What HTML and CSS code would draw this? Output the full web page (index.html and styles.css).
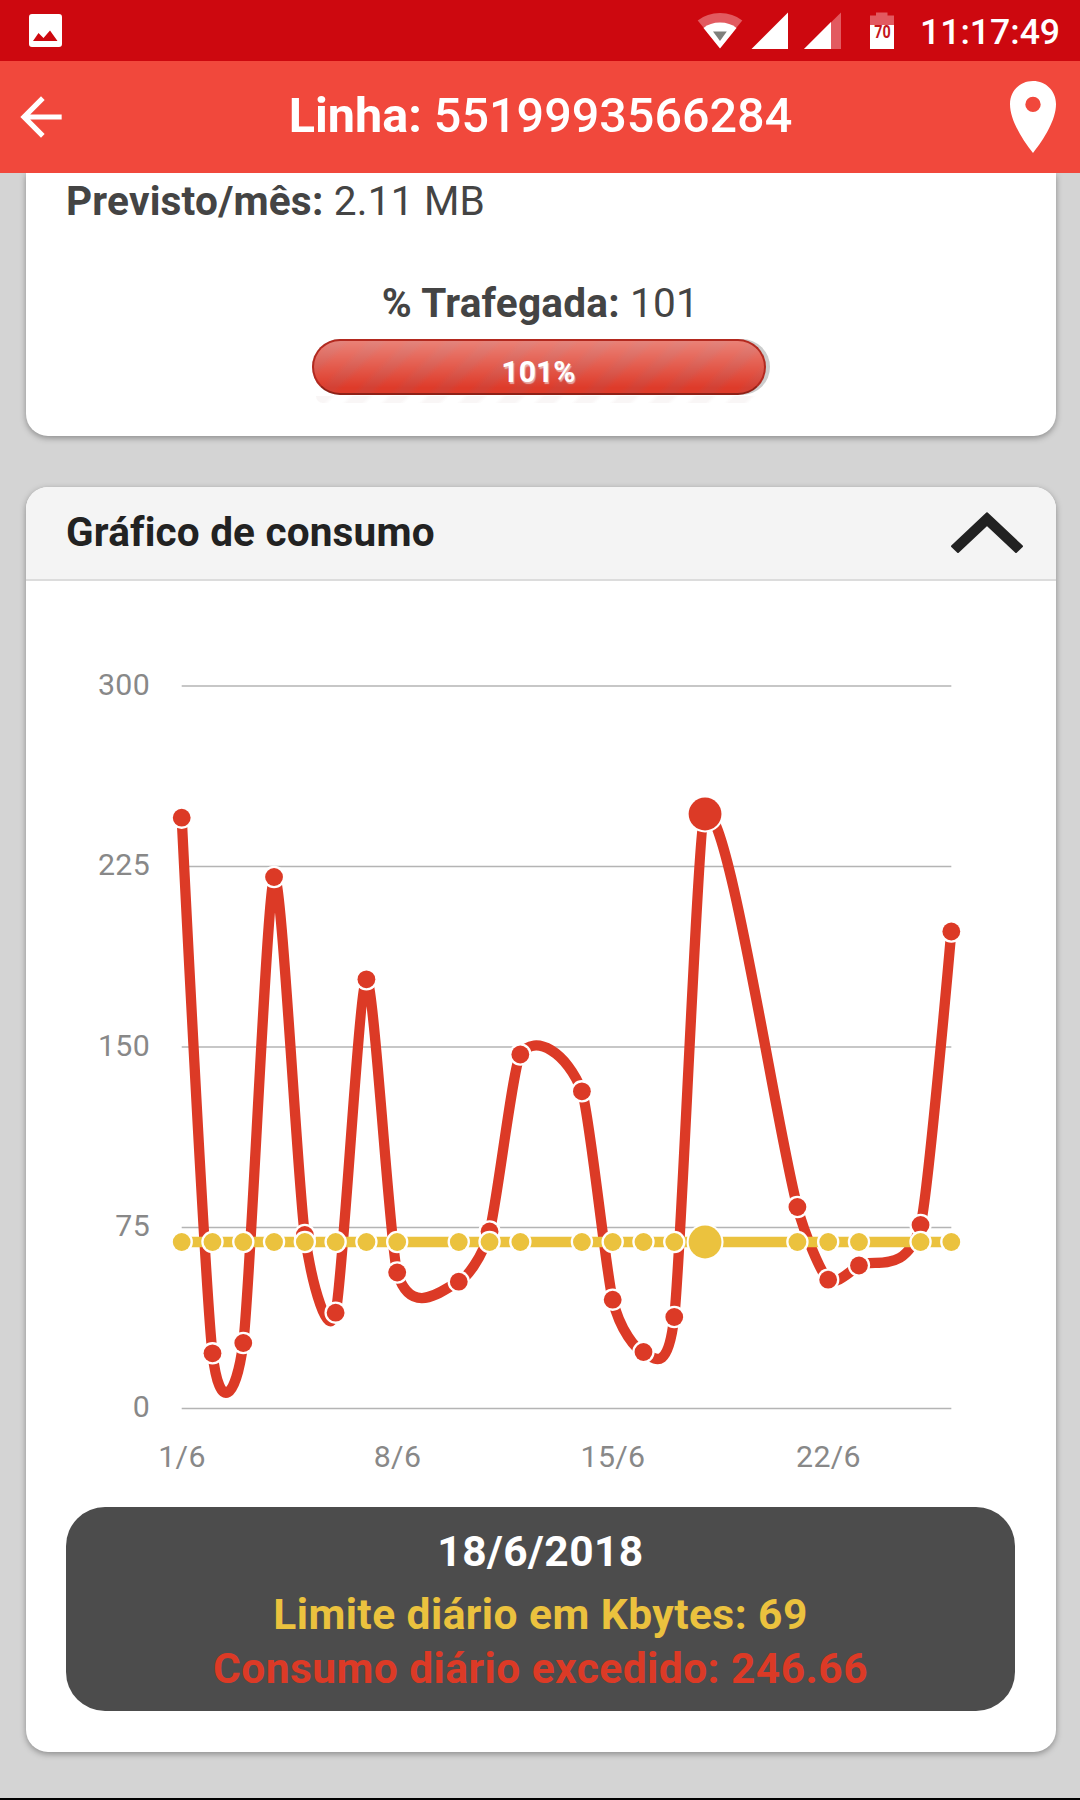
FILE: index.html
```html
<!DOCTYPE html>
<html lang="pt-BR">
<head>
<meta charset="utf-8">
<title>Linha</title>
<link rel="stylesheet" href="styles.css">
</head>
<body>
<div class="status">
  <svg class="status-picture" viewBox="0 0 33 33"><path fill="#fff" fill-rule="evenodd" d="M3 0H30a3 3 0 0 1 3 3V30a3 3 0 0 1-3 3H3a3 3 0 0 1-3-3V3a3 3 0 0 1 3-3ZM4 27H28.500L21 16.500L14.500 24L9.500 19Z"/></svg>
  <svg class="status-icons" viewBox="0 0 200 40">
    <g transform="translate(-697 -11)">
      <path fill="#e25a60" d="M720 48L697.700 20.500Q707 13 720 13T742.300 20.500Z"/>
      <path fill="#fff" d="M720 48.500L703.500 28Q710 22.500 720 22.500T736.500 28Z"/>
      <path fill="#80807c" d="M713 31.500H726.800L720 41Z"/>
      <path fill="#fff" d="M751.500 49L788 12.500V49Z"/>
      <path fill="#e25a60" d="M804 49L841 12.500V49Z"/>
      <path fill="#fff" d="M804 49L831 22V49Z"/>
      <path fill="#e25a60" d="M870 25V15.500H876V12.500H887.500V15.500H894V25Z"/>
      <path fill="#fff" d="M870 25H894V49H870Z"/>
      <text class="battery-level" x="882.500" y="37.500" textLength="16.500" lengthAdjust="spacingAndGlyphs">70</text>
    </g>
  </svg>
  <span class="clock">11:17:49</span>
</div>
<header class="topbar">
  <svg class="back" viewBox="0 0 24 24"><path fill="#fff" d="M20 11H7.830l5.590-5.590L12 4l-8 8 8 8 1.410-1.410L7.830 13H20z"/></svg>
  <h1 class="title"><b>Linha:</b> 5519993566284</h1>
  <svg class="pin" viewBox="0 0 46 72"><path fill="#fff" fill-rule="evenodd" d="M23 0C10 0 0 10 0 23C0 39 12 58 23 72C34 58 46 39 46 23C46 10 36 0 23 0ZM23 15.700a7.700 7.700 0 1 1 0 15.400a7.700 7.700 0 1 1 0-15.400Z"/></svg>
</header>
<main class="content">
  <section class="card usage">
    <p class="forecast"><b>Previsto/mês:</b> 2.11 MB</p>
    <p class="traffic"><b>% Trafegada:</b> 101</p>
    <div class="progress"><div class="progress-fill">101%</div></div>
    <div class="progress-stripes"></div>
  </section>
  <section class="card">
    <div class="card-head">
      <h2 class="card-title">Gráfico de consumo</h2>
      <svg class="chevron" viewBox="0 0 72 42"><path fill="#222" stroke="#222" stroke-width="2" stroke-linejoin="round" d="M1 34.200L36 1.200L71 34.200L65 40L36 12.700L7 40Z"/></svg>
    </div>
    <svg class="chart" id="chart" viewBox="26 581 1030 926"></svg>
    <div class="legend">
      <p class="legend-date">18/6/2018</p>
      <p class="legend-limit">Limite diário em Kbytes: 69</p>
      <p class="legend-usage">Consumo diário excedido: 246.66</p>
    </div>
  </section>
</main>
<script src="chart.js"></script>
</body>
</html>
```
FILE: styles.css
```css
* { box-sizing: border-box; }
body {
  margin: 0;
  height: 1800px;
  overflow: hidden;
  display: flex;
  flex-direction: column;
  background: #d4d4d4;
  border-bottom: 2px solid #000;
  font-family: Roboto, "Liberation Sans", sans-serif;
  color: #444;
}
h1, h2, p { margin: 0; }
b { font-weight: 700; }
svg { display: block; }

.status {
  flex: none;
  height: 61px;
  padding: 0 20px 0 29px;
  display: flex;
  align-items: center;
  background: #cd080f;
  color: #fff;
}
.status-picture { width: 33px; height: 33px; }
.status-icons { width: 200px; height: 40px; margin-left: auto; }
.battery-level { font-size: 17.5px; font-weight: 700; fill: #c4161c; text-anchor: middle; }
.clock { width: 140px; margin-left: 23px; font-size: 35.6px; font-weight: 500; line-height: 61px; padding-top: 4px; white-space: nowrap; }

.topbar {
  flex: none;
  height: 112px;
  padding: 0 24px 0 10px;
  display: flex;
  align-items: center;
  justify-content: space-between;
  background: #f1483c;
  color: #fff;
}
.back { width: 62px; height: 62px; margin-top: 0; }
.title { font-size: 48.5px; font-weight: 500; line-height: 56px; margin: 0 0 2px -15px; padding-left: 14px; }
.pin { width: 46px; height: 72px; margin-top: 0; }

.content { flex: 1; min-height: 0; padding: 0 24px 0 26px; display: flex; flex-direction: column; gap: 51px; }
.card {
  overflow: hidden;
  background: #fff;
  border-radius: 22px;
  box-shadow: 0 2px 6px rgba(0, 0, 0, .35);
}
.usage {
  flex: none;
  height: 263px;
  padding: 1px 41px 0 40px;
  border-radius: 0 0 22px 22px;
  clip-path: inset(0 -12px -12px -12px);
  font-size: 40.6px;
  letter-spacing: .2px;
  line-height: 54px;
  font-weight: 400;
}
.traffic { margin-top: 48px; text-align: center; }
.progress {
  width: 458px;
  height: 56px;
  margin: 9px auto 0;
  border-radius: 28px;
  background: #ccc;
}
.progress-fill {
  width: 454px;
  height: 56px;
  border: 2px solid #b3291f;
  border-bottom-color: #8e2117;
  border-radius: 28px;
  background:
    linear-gradient(rgba(255, 255, 255, .36), rgba(255, 255, 255, 0) 90%),
    repeating-linear-gradient(135deg, #de3b2a 0 9px, #d44033 15px 21px, #de3b2a 27px);
  color: #fff;
  font-size: 30.2px;
  font-weight: 700;
  letter-spacing: 0;
  line-height: 62px;
  text-align: center;
  text-shadow: 1px 2px 1px rgba(235, 210, 210, .7);
}
.progress-stripes {
  width: 450px;
  height: 7px;
  margin: 1px auto 0;
  border-radius: 0 0 7px 7px;
  background: repeating-linear-gradient(135deg, #f9f6f6 0 10px, #fff 14px 23px, #f9f6f6 27px);
}

.card-head {
  height: 94px;
  padding: 0 33px 0 40px;
  display: flex;
  align-items: center;
  justify-content: space-between;
  background: #f4f4f4;
  border-bottom: 2px solid #dcdcdc;
}
.card-title { font-size: 40.5px; font-weight: 700; letter-spacing: .18px; color: #222; margin-top: -2px; }
.chevron { width: 72px; height: 42px; }
.chart { width: 1030px; height: 926px; }
.axis { font-size: 30.3px; fill: #888; letter-spacing: .3px; }
.axis-y { text-anchor: end; }
.axis-x { text-anchor: middle; }

.legend {
  height: 204px;
  margin: 0 41px 41px 40px;
  padding: 18px 0 0;
  border-radius: 39px;
  background: #4c4c4c;
  font-size: 42.5px;
  font-weight: 700;
  letter-spacing: .45px;
  line-height: 54px;
  text-align: center;
}
.legend-date { color: #fff; margin-bottom: 9px; }
.legend-limit { color: #ebc23e; }
.legend-usage { color: #dc3a26; }
```
FILE: chart.js
```js
const NS = 'http://www.w3.org/2000/svg';
const chart = document.getElementById('chart');
const X0 = 181.7, STEP = 30.785, LIMIT_Y = 1242, SELECTED = 18, SMOOTH = 0.235;
const x = day => X0 + (day - 1) * STEP;

// [day of June, vertical position]
const usage = [
  [1, 817.7], [2, 1353.3], [3, 1343], [4, 877], [5, 1235], [6, 1312.7], [7, 979.3],
  [8, 1272.5], [10, 1281.7], [11, 1231.5], [12, 1054.5], [14, 1091.3], [15, 1299.7],
  [16, 1352], [17, 1317], [18, 814], [21, 1207], [22, 1279.7], [23, 1265.5],
  [25, 1225], [26, 931.5]
];

function add(tag, attrs, text) {
  const el = document.createElementNS(NS, tag);
  for (const key in attrs) el.setAttribute(key, attrs[key]);
  if (text !== undefined) el.textContent = text;
  chart.appendChild(el);
}

[[300, 686], [225, 866.5], [150, 1047], [75, 1227.5], [0, 1408.5]].forEach(([value, y]) => {
  add('path', { d: `M${X0} ${y}H${x(26)}`, stroke: '#b4b4b4', 'stroke-width': 1.4 });
  add('text', { class: 'axis axis-y', x: 150, y: y + 8.7 }, value);
});
[1, 8, 15, 22].forEach(day => add('text', { class: 'axis axis-x', x: x(day) + 0.3, y: 1466.7 }, day + '/6'));

const pts = usage.map(([day, y]) => [x(day), y]);
// Control point of pts[i] for the segment that ends at pts[j]
function control(i, j) {
  const p = pts[i], a = pts[i - 1], b = pts[i + 1];
  if (!a || !b) return p;
  const k = SMOOTH * (pts[j][0] - p[0]) / (b[0] - a[0]);
  return [p[0] + k * (b[0] - a[0]), p[1] + k * (b[1] - a[1])];
}
let d = 'M' + pts[0];
for (let i = 1; i < pts.length; i++) d += ` C${control(i - 1, i)} ${control(i, i - 1)} ${pts[i]}`;

function dots(color, yOf) {
  usage.forEach(([day, y]) => {
    const big = day === SELECTED;
    add('circle', { cx: x(day), cy: yOf(y), r: big ? 18.5 : 11.2, fill: '#fff' });
    add('circle', { cx: x(day), cy: yOf(y), r: big ? 16.4 : 8.9, fill: color });
  });
}
add('path', { d, fill: 'none', stroke: '#dc3a26', 'stroke-width': 10.3 });
add('path', { d: `M${X0} ${LIMIT_Y}H${x(26)}`, stroke: '#ebc23e', 'stroke-width': 10.3 });
dots('#dc3a26', y => y);
dots('#ebc23e', () => LIMIT_Y);
```
